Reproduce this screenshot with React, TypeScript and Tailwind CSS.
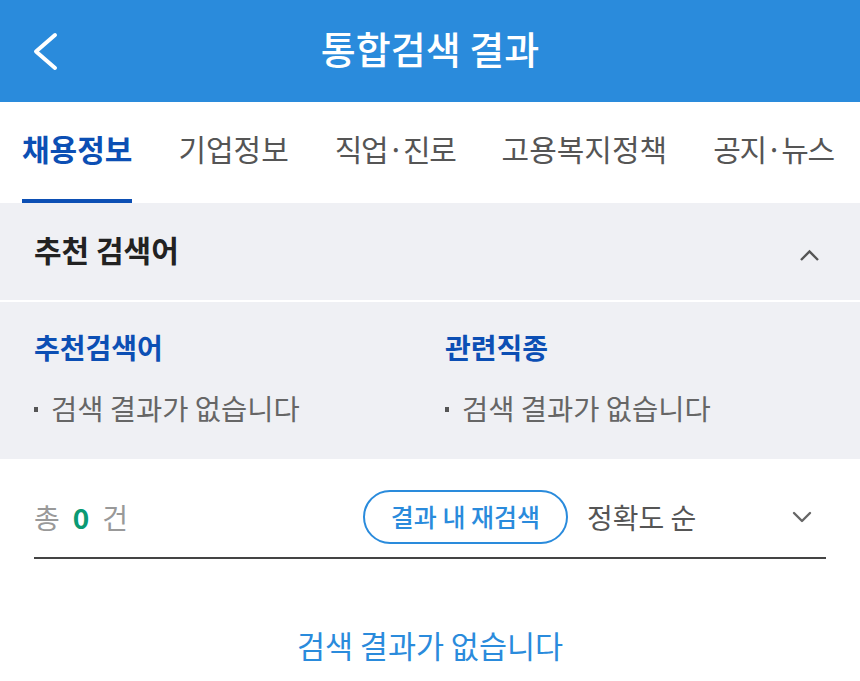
import { ChevronDown } from 'lucide-react';

const font = { fontFamily: '"Noto Sans CJK KR", "Noto Sans", sans-serif' };

const tabs = ['채용정보', '기업정보', '직업·진로', '고용복지정책', '공지·뉴스'];

function EmptyLine() {
  return (
    <div className="flex items-center gap-[13px] text-[28.5px] text-[#666] leading-none">
      <span className="w-[4px] h-[5px] bg-[#555] mt-[2px]" />
      검색 결과가 없습니다
    </div>
  );
}

export default function App() {
  return (
    <div className="w-[860px] h-[681px] bg-white overflow-hidden" style={font}>
      {/* header */}
      <div className="h-[102px] bg-[#2a8bdc] flex items-center relative">
        <svg className="absolute left-[30px] top-[30px]" width="30" height="44" viewBox="0 0 30 44">
          <polyline points="25,5 6,21.5 25,38" fill="none" stroke="white" strokeWidth="4" strokeLinecap="round" strokeLinejoin="round" />
        </svg>
        <h1 className="flex-1 text-center text-white text-[38px] font-medium pb-[8px]">통합검색 결과</h1>
      </div>

      {/* tabs */}
      <div className="h-[101px] flex pl-[22px] gap-[46px] whitespace-nowrap">
        {tabs.map((t, i) => (
          <div
            key={t}
            className={
              i === 0
                ? 'flex items-center text-[30px] font-bold text-[#0c4fb4] border-b-[4px] border-[#0c4fb4] pb-[5px]'
                : t.includes('·')
                  ? 'flex items-center text-[30px] text-[#555] border-b-[4px] border-transparent pb-[5px] tracking-[-1.3px]'
                  : 'flex items-center text-[30px] text-[#555] border-b-[4px] border-transparent pb-[5px]'
            }
          >
            {t}
          </div>
        ))}
      </div>

      {/* recommended */}
      <div className="bg-[#eff0f4]">
        <div className="h-[99px] flex items-center justify-between px-[34px] pb-[4px] border-b-[2px] border-white">
          <span className="text-[30px] font-bold text-[#222]">추천 검색어</span>
          <svg className="mr-[6px] mt-[12px]" width="21" height="13" viewBox="0 0 21 13">
            <polyline points="2,11 10.5,2.5 19,11" fill="none" stroke="#555" strokeWidth="2.4" />
          </svg>
        </div>
        <div className="h-[157px] flex px-[34px] pt-[24px]">
          <div className="w-[411px] flex flex-col gap-[26px]">
            <span className="text-[28px] font-bold text-[#0c4fb4]">추천검색어</span>
            <EmptyLine />
          </div>
          <div className="flex flex-col gap-[26px]">
            <span className="text-[28px] font-bold text-[#0c4fb4]">관련직종</span>
            <EmptyLine />
          </div>
        </div>
      </div>

      {/* result bar */}
      <div className="mx-[34px] h-[100px] flex items-center border-b-[2px] border-[#444] pt-[17px]">
        <div className="flex-1 flex items-center gap-[13px] text-[28px] text-[#999]">
          <span>총</span>
          <span className="text-[#0a9a73] font-bold">0</span>
          <span>건</span>
        </div>
        <button className="h-[54px] w-[205px] rounded-full border-[2px] border-[#2a8bdc] text-[#2a8bdc] text-[25px] font-medium">
          결과 내 재검색
        </button>
        <span className="ml-[19px] w-[199px] text-[28px] text-[#555]">정확도 순</span>
        <ChevronDown className="text-[#666] mr-[8px]" size={32} strokeWidth={1.8} />
      </div>

      {/* empty */}
      <div className="text-center text-[30.5px] text-[#2a8bdc] mt-[64px]">검색 결과가 없습니다</div>
    </div>
  );
}
